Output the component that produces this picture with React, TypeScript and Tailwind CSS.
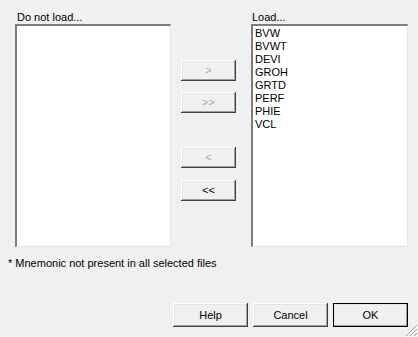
import React from 'react';

const raised =
  'shadow-[inset_-1px_-1px_0_#404040,inset_1px_1px_0_#ffffff,inset_-2px_-2px_0_#a0a0a0,inset_2px_2px_0_#e3e3e3]';

const ArrowButton = ({ label, disabled, className }: { label: string; disabled?: boolean; className?: string }) => (
  <button
    className={`w-[55px] h-[21px] bg-[#f0f0f0] text-[11px] leading-none ${raised} ${
      disabled ? 'text-[#a8a8a8]' : 'text-black'
    } ${className ?? ''}`}
  >
    {label}
  </button>
);

const DialogButton = ({ label, isDefault }: { label: string; isDefault?: boolean }) => (
  <button
    className={`w-[75px] h-[24px] bg-[#f0f0f0] text-[11px] text-black ${raised} ${
      isDefault ? 'outline outline-1 outline-black -outline-offset-1' : ''
    }`}
  >
    {label}
  </button>
);

const listBox =
  'bg-white border-t-2 border-l-2 border-t-[#7c7c7c] border-l-[#7c7c7c] border-r border-b border-r-[#e4e4e4] border-b-[#e4e4e4]';

const mnemonics = ['BVW', 'BVWT', 'DEVI', 'GROH', 'GRTD', 'PERF', 'PHIE', 'VCL'];

export default function App() {
  return (
    <div
      className="relative w-[418px] h-[337px] bg-[#f0f0f0] text-black text-[11px] overflow-hidden"
      style={{ fontFamily: '"Liberation Sans", Arial, sans-serif' }}
    >
      <div className="flex pt-[11px] pl-[15px]">
        {/* Do not load */}
        <div className="flex flex-col">
          <span className="pl-[2px] leading-[13px]">Do not load...</span>
          <div className={`${listBox} w-[156px] h-[223px]`} />
        </div>

        {/* Move buttons */}
        <div className="flex flex-col ml-[10px] pt-[49px]">
          <ArrowButton label=">" disabled />
          <ArrowButton label=">>" disabled className="mt-[11px]" />
          <ArrowButton label="<" disabled className="mt-[34px]" />
          <ArrowButton label="<<" className="mt-[12px]" />
        </div>

        {/* Load */}
        <div className="flex flex-col ml-[15px]">
          <span className="pl-[1px] leading-[13px]">Load...</span>
          <div className={`${listBox} w-[157px] h-[223px] pt-[1px] pl-[2px]`}>
            {mnemonics.map((m) => (
              <div key={m} className="leading-[13px]">
                {m}
              </div>
            ))}
          </div>
        </div>
      </div>

      <p className="mt-[10px] ml-[8px] leading-[13px]">* Mnemonic not present in all selected files</p>

      <div className="flex justify-end gap-[5px] mt-[33px] pr-[10px]">
        <DialogButton label="Help" />
        <DialogButton label="Cancel" />
        <DialogButton label="OK" isDefault />
      </div>

      <svg className="absolute right-0 bottom-0" width="13" height="13" viewBox="0 0 13 13">
        <g stroke="#a0a0a0" strokeWidth="1">
          <line x1="12" y1="1" x2="1" y2="12" />
          <line x1="12" y1="5" x2="5" y2="12" />
          <line x1="12" y1="9" x2="9" y2="12" />
        </g>
        <g stroke="#ffffff" strokeWidth="1">
          <line x1="13" y1="2" x2="2" y2="13" />
          <line x1="13" y1="6" x2="6" y2="13" />
          <line x1="13" y1="10" x2="10" y2="13" />
        </g>
      </svg>
    </div>
  );
}
